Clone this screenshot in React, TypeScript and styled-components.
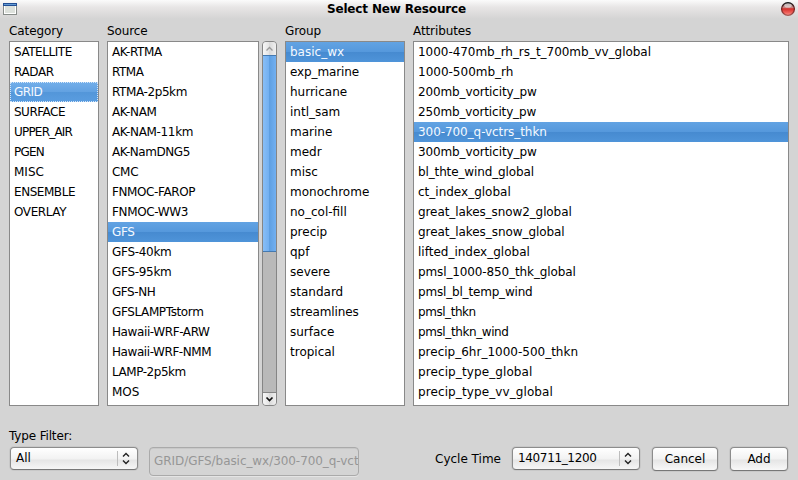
import React from "react";
import styled, { createGlobalStyle } from "styled-components";

const GlobalStyle = createGlobalStyle`
  * { box-sizing: border-box; }
  body { margin: 0; background: #d4d4d4; overflow: hidden; }
`;

const Window = styled.div`
  width: 798px;
  height: 480px;
  display: flex;
  flex-direction: column;
  background: #d4d4d4;
  color: #000;
  font: 12px/20px "DejaVu Sans", sans-serif;
  white-space: nowrap;
  overflow: hidden;
`;

const TitleBar = styled.header`
  height: 21px;
  flex: none;
  display: grid;
  grid-template-columns: 14px 1fr 16px;
  padding: 0 2px 0 3px;
  background: linear-gradient(#fbfbfb 0, #e8e6e6 7px, #d4d4d4 19px);
  svg { display: block; }
`;

const Title = styled.h1`
  margin: 0;
  padding-right: 4px;
  text-align: center;
  font-size: 12px;
  line-height: 18px;
  font-weight: bold;
  letter-spacing: -0.15px;
`;

const Browser = styled.main`
  display: grid;
  grid-template-columns: 90px 170px 120px 376px;
  column-gap: 8px;
  padding-left: 9px;
`;

const Column = styled.section`
  min-width: 0;
`;

const Heading = styled.h2`
  margin: 0;
  height: 20px;
  font-size: 12px;
  line-height: 20px;
  font-weight: normal;
  letter-spacing: -0.1px;
`;

const ListArea = styled.div`
  display: flex;
  gap: 3px;
  height: 365px;
`;

const List = styled.ul`
  flex: 1;
  min-width: 0;
  margin: 0;
  padding: 0;
  list-style: none;
  border: 1px solid #898989;
  background: #fff;
  overflow: hidden;
`;

const Item = styled.li<{ $selected: boolean; $focused: boolean; $tracking: number }>`
  height: 20px;
  padding-left: 4px;
  line-height: 20px;
  letter-spacing: ${(p) => p.$tracking}px;
  color: ${(p) => (p.$selected ? "#f4f9ff" : "#000")};
  background: ${(p) =>
    !p.$selected
      ? "none"
      : p.$focused
        ? "linear-gradient(#73afea 0, #62a1e1 10px, #5396d9 10px, #5a9de0 20px)"
        : "linear-gradient(#62a3e3 0, #5598dc 10px, #468ad0 10px, #4f94d9 20px)"};
  outline: ${(p) => (p.$focused ? "1px dotted #d5e6f8" : "none")};
  outline-offset: -1px;
`;

const ScrollBar = styled.div`
  width: 15px;
  flex: none;
  display: flex;
  flex-direction: column;
  border: 1px solid #858585;
  border-radius: 4px;
  background: #b9b9b9;
  overflow: hidden;
`;

const ScrollButton = styled.div<{ $end?: boolean }>`
  height: 13px;
  flex: none;
  background: linear-gradient(90deg, #f7f7f7, #e2e2e2 50%, #dadada 50%, #f0f0f0);
  border-top: ${(p) => (p.$end ? "1px solid #858585" : "none")};
  svg { display: block; }
`;

const Thumb = styled.div`
  height: 197px;
  margin: 0 -1px;
  border: 1px solid #4479b0;
  background: linear-gradient(90deg, #88bef6, #70aef0 50%, #5e9fe2 50%, #72b0f1);
`;

const Spacer = styled.div`
  flex: 1;
`;

const Footer = styled.footer`
  display: grid;
  grid-template-columns: 128px 11px 210px 76px 77px 128px 12px 66px 12px 58px;
  align-items: start;
  padding: 41px 0 0 10px;
`;

const FilterLabel = styled.label`
  display: block;
  height: 20px;
  margin: -21px 0 1px -1px;
  line-height: 20px;
  letter-spacing: -0.15px;
`;

const Control = styled.button`
  display: flex;
  align-items: center;
  justify-content: center;
  width: 100%;
  height: 24px;
  padding: 0;
  border: 1px solid #8c8c8c;
  border-bottom-color: #777;
  border-radius: 4px;
  box-shadow: 0 0 0 1px rgba(120, 120, 120, 0.13);
  background: linear-gradient(#fff 0, #f2f2f2 11px, #e5e5e5 12px, #f8f8f8 22px);
  color: #000;
  font: inherit;
`;

const Combo = styled(Control)`
  height: 23px;
  justify-content: space-between;
  padding: 0 3px 0 5px;
  line-height: 20px;
`;

const ComboText = styled.span<{ $tracking?: number }>`
  height: 21px;
  letter-spacing: ${(p) => p.$tracking ?? 0}px;
`;

const PathField = styled.div`
  height: 29px;
  padding: 0 0 0 4px;
  border: 1px solid #aaa;
  border-radius: 4px;
  box-shadow: 0 1px 0 #e4e4e4, inset 0 1px 0 #c8c8c8;
  color: #969696;
  line-height: 26px;
  letter-spacing: -0.06px;
  overflow: hidden;
`;

const CycleLabel = styled.span`
  line-height: 24px;
`;

const WindowIcon = () => (
  <svg width="14" height="18" viewBox="0 0 14 18" shapeRendering="crispEdges">
    <path fill="#878c89" d="M0 3h14v12H0z" />
    <path fill="#fff" d="M1 5h12v9H1z" />
    <path fill="#dde1dc" d="M2 6h10v7H2z" />
    <path fill="#244f94" d="M0 3h14v3H0z" />
    <path fill="#639bd4" d="M1 4h12v1H1z" />
  </svg>
);

const CloseIcon = () => (
  <svg width="16" height="18" viewBox="0 0 16 18">
    <defs>
      <linearGradient id="glass" x2="0" y2="1">
        <stop offset="0" stopColor="#555" />
        <stop offset=".4" stopColor="#cf8582" />
        <stop offset=".48" stopColor="#d32f2b" />
        <stop offset=".8" stopColor="#f1645e" />
        <stop offset="1" stopColor="#f79a91" />
      </linearGradient>
      <linearGradient id="rim" x2="0" y2="1">
        <stop offset="0" stopColor="#171c1e" />
        <stop offset=".55" stopColor="#7a1b1a" />
        <stop offset="1" stopColor="#a65a55" />
      </linearGradient>
    </defs>
    <circle cx="8" cy="9" r="6.4" fill="url(#glass)" stroke="url(#rim)" strokeWidth="1.2" />
    <ellipse cx="8" cy="5.6" rx="3.8" ry="2" fill="#fff" opacity=".55" />
  </svg>
);

const Chevron = ({ down = false }: { down?: boolean }) => (
  <svg width="13" height="13" viewBox="0 0 13 13" fill="none">
    <path
      d={down ? "M3.5 4.5l3 3 3-3" : "M3.5 8.5l3-3 3 3"}
      stroke={down ? "#111" : "#999"}
      strokeWidth={down ? 1.7 : 1.3}
    />
  </svg>
);

const ComboArrows = () => (
  <svg width="17" height="21" viewBox="0 0 17 21" fill="none">
    <path d="M.5 3v15" stroke="#bdbdbd" />
    <path d="M6 8.5l3-3 3 3M6 12.5l3 3 3-3" stroke="#222" strokeWidth="1.4" />
  </svg>
);

type ListData = { title: string; items: string[]; selected: string; focused?: boolean; scroll?: boolean };

const columns: ListData[] = [
  {
    title: "Category",
    selected: "GRID",
    focused: true,
    items: ["SATELLITE", "RADAR", "GRID", "SURFACE", "UPPER_AIR", "PGEN", "MISC", "ENSEMBLE", "OVERLAY"],
  },
  {
    title: "Source",
    selected: "GFS",
    scroll: true,
    items: ["AK-RTMA", "RTMA", "RTMA-2p5km", "AK-NAM", "AK-NAM-11km", "AK-NamDNG5", "CMC", "FNMOC-FAROP", "FNMOC-WW3", "GFS", "GFS-40km", "GFS-95km", "GFS-NH", "GFSLAMPTstorm", "Hawaii-WRF-ARW", "Hawaii-WRF-NMM", "LAMP-2p5km", "MOS"],
  },
  {
    title: "Group",
    selected: "basic_wx",
    items: ["basic_wx", "exp_marine", "hurricane", "intl_sam", "marine", "medr", "misc", "monochrome", "no_col-fill", "precip", "qpf", "severe", "standard", "streamlines", "surface", "tropical"],
  },
  {
    title: "Attributes",
    selected: "300-700_q-vctrs_thkn",
    items: ["1000-470mb_rh_rs_t_700mb_vv_global", "1000-500mb_rh", "200mb_vorticity_pw", "250mb_vorticity_pw", "300-700_q-vctrs_thkn", "300mb_vorticity_pw", "bl_thte_wind_global", "ct_index_global", "great_lakes_snow2_global", "great_lakes_snow_global", "lifted_index_global", "pmsl_1000-850_thk_global", "pmsl_bl_temp_wind", "pmsl_thkn", "pmsl_thkn_wind", "precip_6hr_1000-500_thkn", "precip_type_global", "precip_type_vv_global"],
  },
];

/* Letter spacing, in px, of the names that are set tighter or looser than the font's own advances. */
const tracking: Record<string, number> = {
  SATELLITE: -0.45,
  RADAR: -0.4,
  GRID: -0.6,
  SURFACE: -0.5,
  UPPER_AIR: -0.8,
  PGEN: -0.75,
  ENSEMBLE: -0.45,
  OVERLAY: -0.4,
  "AK-RTMA": -0.4,
  RTMA: -0.5,
  "RTMA-2p5km": -0.4,
  "AK-NAM": -0.35,
  "AK-NAM-11km": -0.35,
  "AK-NamDNG5": -0.45,
  CMC: -0.3,
  "FNMOC-FAROP": -0.4,
  "FNMOC-WW3": -0.35,
  GFS: -0.4,
  "GFS-40km": -0.3,
  "GFS-95km": -0.3,
  "GFS-NH": -0.45,
  GFSLAMPTstorm: -0.38,
  "Hawaii-WRF-ARW": -0.4,
  "Hawaii-WRF-NMM": -0.43,
  "LAMP-2p5km": -0.45,
  exp_marine: -0.12,
  streamlines: -0.13,
  "1000-470mb_rh_rs_t_700mb_vv_global": -0.04,
  "200mb_vorticity_pw": -0.12,
  "250mb_vorticity_pw": -0.15,
  "300mb_vorticity_pw": -0.12,
  "300-700_q-vctrs_thkn": -0.07,
  bl_thte_wind_global: -0.13,
  great_lakes_snow2_global: -0.09,
  great_lakes_snow_global: -0.07,
  "pmsl_1000-850_thk_global": -0.12,
  pmsl_bl_temp_wind: -0.18,
  pmsl_thkn: -0.45,
  pmsl_thkn_wind: -0.4,
  precip_type_global: 0.1,
  precip_type_vv_global: 0.1,
};

const ResourceColumn = ({ title, items, selected, focused = false, scroll }: ListData) => (
  <Column>
    <Heading>{title}</Heading>
    <ListArea>
      <List>
        {items.map((name) => (
          <Item
            key={name}
            $selected={name === selected}
            $focused={focused && name === selected}
            $tracking={tracking[name] ?? 0}
          >
            {name}
          </Item>
        ))}
      </List>
      {scroll && (
        <ScrollBar>
          <ScrollButton><Chevron /></ScrollButton>
          <Thumb />
          <Spacer />
          <ScrollButton $end><Chevron down /></ScrollButton>
        </ScrollBar>
      )}
    </ListArea>
  </Column>
);

export default function App() {
  return (
    <Window>
      <GlobalStyle />
      <TitleBar>
        <WindowIcon />
        <Title>Select New Resource</Title>
        <CloseIcon />
      </TitleBar>
      <Browser>
        {columns.map((column) => (
          <ResourceColumn key={column.title} {...column} />
        ))}
      </Browser>
      <Footer>
        <div>
          <FilterLabel>Type Filter:</FilterLabel>
          <Combo><ComboText>All</ComboText><ComboArrows /></Combo>
        </div>
        <Spacer />
        <PathField>GRID/GFS/basic_wx/300-700_q-vct</PathField>
        <Spacer />
        <CycleLabel>Cycle Time</CycleLabel>
        <Combo><ComboText $tracking={-0.35}>140711_1200</ComboText><ComboArrows /></Combo>
        <Spacer />
        <Control>Cancel</Control>
        <Spacer />
        <Control>Add</Control>
      </Footer>
    </Window>
  );
}
